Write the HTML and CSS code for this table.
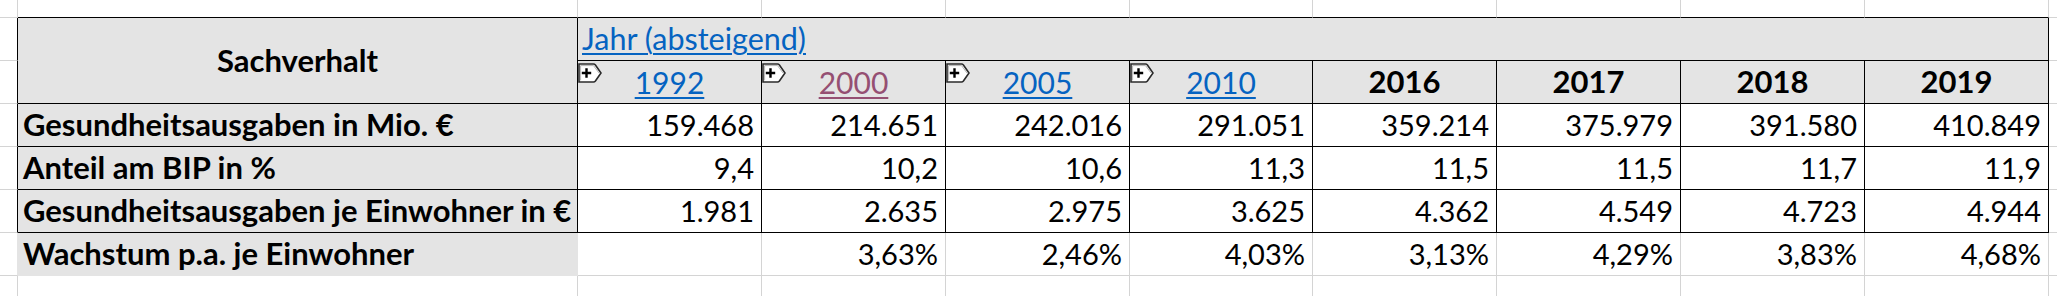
FILE: index.html
```html
<!DOCTYPE html>
<html lang="de">
<head>
<meta charset="utf-8">
<title>Gesundheitsausgaben</title>
<link rel="stylesheet" href="styles.css">
</head>
<body>
<div class="sheet">
  <!-- row 0: above table -->
  <div class="gut"></div>
  <div class="above"></div>
  <div class="above"></div><div class="above"></div><div class="above"></div><div class="above"></div>
  <div class="above"></div><div class="above"></div><div class="above"></div><div class="above"></div>
  <div class="fill"></div>

  <!-- row 1: Jahr -->
  <div class="gut edge"></div>
  <div class="tb grey head-a"><b>Sachverhalt</b></div>
  <div class="tb grey jahr"><a class="link" href="#">Jahr (absteigend)</a></div>
  <div class="fill"></div>

  <!-- row 2: years -->
  <div class="gut edge"></div>
  <div class="tb grey year"><span class="plus"><svg width="24" height="20" viewBox="0 0 24 20"><path d="M1 1 H15.5 Q16.6 1 17.4 2 L23 10 L17.4 18 Q16.6 19 15.5 19 H1 Z" fill="#fff" stroke="#2b2b2b" stroke-width="1.6"/><path d="M2.6 17.4 V2.6 H15.5 L21 10" fill="none" stroke="#b5b5b5"/><path d="M3.8 10 H13.2 M8.5 5.3 V14.7" stroke="#000" stroke-width="2.4"/></svg></span><a class="link" href="#">1992</a></div>
  <div class="tb grey year"><span class="plus"><svg width="24" height="20" viewBox="0 0 24 20"><path d="M1 1 H15.5 Q16.6 1 17.4 2 L23 10 L17.4 18 Q16.6 19 15.5 19 H1 Z" fill="#fff" stroke="#2b2b2b" stroke-width="1.6"/><path d="M2.6 17.4 V2.6 H15.5 L21 10" fill="none" stroke="#b5b5b5"/><path d="M3.8 10 H13.2 M8.5 5.3 V14.7" stroke="#000" stroke-width="2.4"/></svg></span><a class="link visited" href="#">2000</a></div>
  <div class="tb grey year"><span class="plus"><svg width="24" height="20" viewBox="0 0 24 20"><path d="M1 1 H15.5 Q16.6 1 17.4 2 L23 10 L17.4 18 Q16.6 19 15.5 19 H1 Z" fill="#fff" stroke="#2b2b2b" stroke-width="1.6"/><path d="M2.6 17.4 V2.6 H15.5 L21 10" fill="none" stroke="#b5b5b5"/><path d="M3.8 10 H13.2 M8.5 5.3 V14.7" stroke="#000" stroke-width="2.4"/></svg></span><a class="link" href="#">2005</a></div>
  <div class="tb grey year"><span class="plus"><svg width="24" height="20" viewBox="0 0 24 20"><path d="M1 1 H15.5 Q16.6 1 17.4 2 L23 10 L17.4 18 Q16.6 19 15.5 19 H1 Z" fill="#fff" stroke="#2b2b2b" stroke-width="1.6"/><path d="M2.6 17.4 V2.6 H15.5 L21 10" fill="none" stroke="#b5b5b5"/><path d="M3.8 10 H13.2 M8.5 5.3 V14.7" stroke="#000" stroke-width="2.4"/></svg></span><a class="link" href="#">2010</a></div>
  <div class="tb grey year"><b>2016</b></div>
  <div class="tb grey year"><b>2017</b></div>
  <div class="tb grey year"><b>2018</b></div>
  <div class="tb grey year"><b>2019</b></div>
  <div class="fill"></div>

  <!-- row 3 -->
  <div class="gut edge"></div>
  <div class="tb grey label">Gesundheitsausgaben in Mio. €</div>
  <div class="tb num">159.468</div><div class="tb num">214.651</div><div class="tb num">242.016</div><div class="tb num">291.051</div>
  <div class="tb num">359.214</div><div class="tb num">375.979</div><div class="tb num">391.580</div><div class="tb num">410.849</div>
  <div class="fill"></div>

  <!-- row 4 -->
  <div class="gut edge"></div>
  <div class="tb grey label">Anteil am BIP in %</div>
  <div class="tb num">9,4</div><div class="tb num">10,2</div><div class="tb num">10,6</div><div class="tb num">11,3</div>
  <div class="tb num">11,5</div><div class="tb num">11,5</div><div class="tb num">11,7</div><div class="tb num">11,9</div>
  <div class="fill"></div>

  <!-- row 5 -->
  <div class="gut edge"></div>
  <div class="tb grey label">Gesundheitsausgaben je Einwohner in €</div>
  <div class="tb num">1.981</div><div class="tb num">2.635</div><div class="tb num">2.975</div><div class="tb num">3.625</div>
  <div class="tb num">4.362</div><div class="tb num">4.549</div><div class="tb num">4.723</div><div class="tb num">4.944</div>
  <div class="fill"></div>

  <!-- row 6: growth, outside the bordered range -->
  <div class="gut shade"></div>
  <div class="grey label free">Wachstum p.a. je Einwohner</div>
  <div class="num"></div><div class="num">3,63%</div><div class="num">2,46%</div><div class="num">4,03%</div>
  <div class="num">3,13%</div><div class="num">4,29%</div><div class="num">3,83%</div><div class="num">4,68%</div>
  <div class="fill"></div>

  <!-- row 7: empty -->
  <div class="gut last"></div>
  <div class="last"></div>
  <div class="last"></div><div class="last"></div><div class="last"></div><div class="last"></div>
  <div class="last"></div><div class="last"></div><div class="last"></div><div class="last"></div>
  <div class="fill last"></div>
</div>
</body>
</html>
```

FILE: styles.css
```css
html, body {
  margin: 0;
  background: #ffffff;
}

body {
  font-family: Lato, "Open Sans", sans-serif;
  font-size: 30px;
  color: #000000;
}

.sheet {
  display: grid;
  grid-template-columns: 18px 560px 184px 184px 184px 183px 184px 184px 184px 184px 9px;
  grid-template-rows: 18px repeat(6, 43px) 20px;
  width: 2057px;
  height: 296px;
  overflow: hidden;
}

.sheet > div {
  box-sizing: border-box;
  position: relative;
  display: flex;
  align-items: flex-end;
  min-width: 0;
  padding: 0 7px 3px 5px;
  line-height: 1.2;
  white-space: nowrap;
  border-right: 1px solid #d4d4d4;
  border-bottom: 1px solid #d4d4d4;
}

.sheet > .above {
  border-bottom-color: #000000;
}

.sheet > .edge {
  border-right-color: #000000;
}

.sheet > .shade {
  border-right-color: #e4e4e4;
}

.sheet > .fill {
  border-right: 0;
}

.sheet > .last {
  border-bottom: 0;
}

.sheet > .tb {
  border-right-color: #000000;
  border-bottom-color: #000000;
}

.grey {
  background: #e4e4e4;
}

.sheet > .free {
  border-right-color: #e4e4e4;
  border-bottom-color: #e4e4e4;
}

.head-a {
  grid-row: span 2;
  justify-content: center;
  align-items: center !important;
  padding: 0 !important;
  font-size: 31px;
}

.jahr {
  grid-column: span 8;
  padding-left: 4px !important;
  font-size: 30.5px;
}

.year {
  justify-content: center;
  padding: 0 0 3px 0 !important;
  font-size: 30px;
}

.year b {
  font-size: 31px;
}

.head-a b,
.year b {
  font-weight: 700;
}

.num {
  justify-content: flex-end;
  font-size: 29px;
}

.label {
  font-weight: 700;
  font-size: 31px;
}

.link {
  color: #0563c1;
  text-decoration: underline;
  text-decoration-thickness: 2px;
  text-underline-offset: 3px;
}

.link.visited {
  color: #954f72;
}

.plus {
  position: absolute;
  left: 0;
  top: 2px;
  width: 24px;
  height: 20px;
  line-height: 0;
}
```
